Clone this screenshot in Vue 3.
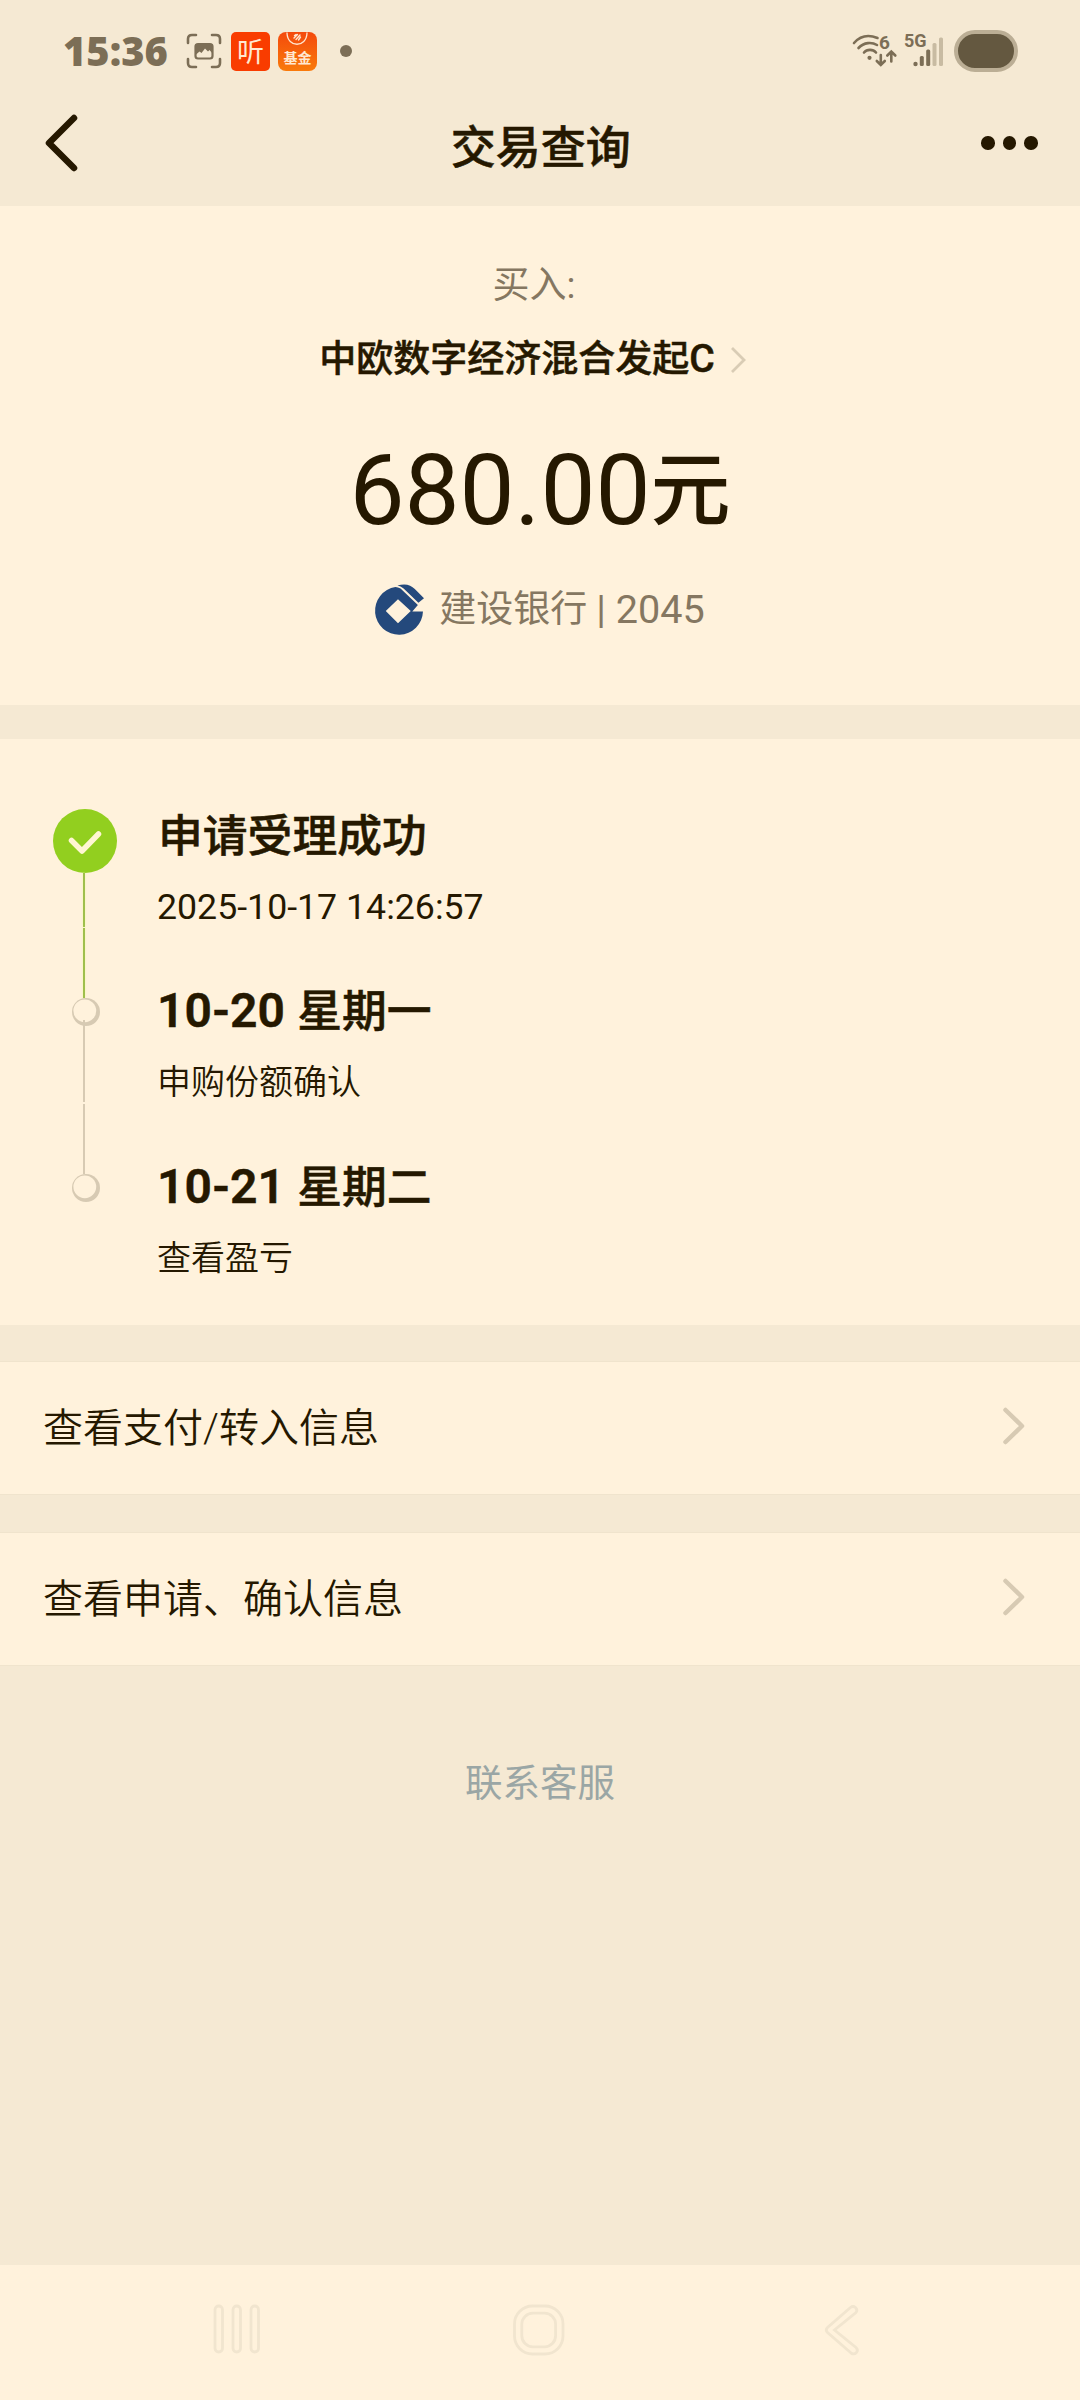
<template>
  <div class="page">
    <header class="status-bar">
      <span class="clock">15:36</span>
      <svg class="scan-icon" viewBox="0 0 36 36" fill="none">
        <path
          d="M2 10V6Q2 2 6 2H10M26 2H30Q34 2 34 6V10M34 26V30Q34 34 30 34H26M10 34H6Q2 34 2 30V26"
          stroke="#7c6e56"
          stroke-width="2.6"
          stroke-linecap="round"
        />
        <rect x="9.500" y="11" width="17" height="14.5" rx="2.5" stroke="#7c6e56" stroke-width="2.200" />
        <path
          d="M9.500 11H26.500V20.500L23.500 17L22 18.500L19 15.500L15.500 20L13.500 18.500L9.500 22Z"
          fill="#7c6e56"
        />
      </svg>
      <span class="app-icon app-icon--listen"><span>听</span></span>
      <span class="app-icon app-icon--fund">
        <svg viewBox="0 0 39 39" fill="none" stroke="#ffe6cf" stroke-linecap="round">
          <path d="M9 1C9.500 16 28.500 16 29 1" stroke-width="1.3" />
          <path d="M16 6L19.500 2.500M18 7.500L22 3M20.500 8L22.500 5M16.500 3.500L18 2.500" stroke-width="1.4" />
        </svg>
        <span>基金</span>
      </span>
      <i class="more-dot"></i>

      <svg class="wifi-icon" viewBox="0 0 46 36" fill="none" stroke="#7c6e56" stroke-linecap="round" stroke-width="2.6">
        <path d="M2 10C9 2 18 2 25.500 5M6.500 15C12 9 20 9 25 12M12 19.500C15 16 21 16 24 19.500" />
        <circle cx="17.500" cy="24.800" r="2.100" fill="#7c6e56" stroke="none" />
        <path d="M28.800 22V31M24.800 28L28.800 32L32.800 28M39.300 28.500V20M35.300 22.500L39.300 18.500L43.300 22.500" />
        <text x="27" y="15.500" class="wifi-text">6</text>
      </svg>
      <svg class="signal-icon" viewBox="0 0 40 36">
        <text x="-1" y="13.800" class="net-text">5G</text>
        <circle cx="10.500" cy="31" r="2.200" fill="#7c6e56" />
        <rect x="14.800" y="23" width="4" height="10" rx="1.500" fill="#7c6e56" />
        <rect x="21.200" y="16.500" width="4" height="16.500" rx="1.500" fill="#7c6e56" />
        <rect x="27.500" y="10" width="4" height="23" rx="1.500" fill="#c8bba2" />
        <rect x="34" y="4.500" width="4" height="28.500" rx="1.500" fill="#c8bba2" />
      </svg>
      <span class="battery"></span>
    </header>

    <nav class="title-bar">
      <svg class="back-icon" viewBox="0 0 34 58" fill="none">
        <path d="M30 4L5 29L30 54" stroke="#251800" stroke-width="6.500" stroke-linecap="round" stroke-linejoin="round" />
      </svg>
      <h1>交易查询</h1>
      <div class="menu"><i></i><i></i><i></i></div>
    </nav>

    <section class="summary">
      <p class="kind">买入:</p>
      <p class="fund">
        <span>中欧数字经济混合发起<b>C</b></span>
        <svg viewBox="0 0 16 28" fill="none">
          <path d="M2 2L14 14L2 26" stroke="#d9ccb5" stroke-width="2.800" />
        </svg>
      </p>
      <p class="amount">680.00<span>元</span></p>
      <p class="bank">
        <svg viewBox="0 0 50 50">
          <path
            d="M22 3A23.500 23.500 0 1 0 49 27H38.500L44 20.500L27 4.500Q24.500 3 22 3ZM24.500 15L37 26.500L24.500 38.500L12.500 26.500Z"
            fill="#24497c"
            fill-rule="evenodd"
          />
          <path d="M24 1.500C32-1 37 1 41 5L50 14L44.500 18.500L30 4.500Q27 2 24 1.500Z" fill="#24497c" />
        </svg>
        <span class="bank-name">建设银行</span>
        <span class="bank-tail">| 2045</span>
      </p>
    </section>

    <section class="progress">
      <div v-for="step in steps" :key="step.note" class="step" :class="{ 'step--done': step.done }">
        <div class="rail">
          <svg v-if="step.done" class="check" viewBox="0 0 64 64" fill="none">
            <circle cx="32" cy="32" r="32" fill="#92cf1f" />
            <path d="M18.500 31.500L29 42L45.500 25" stroke="#fff6d2" stroke-width="5.500" stroke-linecap="round" stroke-linejoin="round" />
          </svg>
          <svg v-else class="node" viewBox="0 0 28 28">
            <circle cx="14" cy="14" r="14" fill="#d7cab3" />
            <circle cx="12.800" cy="12.800" r="11.400" fill="#fff2dc" />
          </svg>
          <template v-if="!step.last">
            <i class="line line--upper"></i>
            <i class="line line--lower"></i>
          </template>
        </div>
        <div class="step-body">
          <h2><span v-if="step.date" class="num">{{ step.date }}</span>{{ step.title }}</h2>
          <p :class="{ time: step.done }">{{ step.note }}</p>
        </div>
      </div>
    </section>

    <a v-for="row in rows" :key="row" class="link-row">
      <span>{{ row }}</span>
      <svg viewBox="0 0 22 36" fill="none">
        <path d="M2.500 2L19 18L2.500 34" stroke="#d7cab3" stroke-width="4.500" stroke-linecap="round" stroke-linejoin="round" />
      </svg>
    </a>

    <a class="service">联系客服</a>

    <footer class="nav-bar">
      <svg class="nav-recent" viewBox="0 0 48 50">
        <rect x="2" y="2" width="7.500" height="46" rx="3.700" />
        <rect x="20" y="2" width="7.500" height="46" rx="3.700" />
        <rect x="38" y="2" width="7.500" height="46" rx="3.700" />
      </svg>
      <svg class="nav-home" viewBox="0 0 52 52">
        <rect x="1.500" y="2" width="48.500" height="48" rx="18" />
        <rect x="8.800" y="9.200" width="33.800" height="33.600" rx="11" />
      </svg>
      <svg class="nav-back" viewBox="0 0 36 52">
        <path d="M26.500 3.500L3.500 23.500Q1 26 3.500 28.500L27 49Q30 51 32.500 48.500Q34.500 46 32 43.500L10.500 26L32 8.500Q34 6 31.500 3.500Q29 1.500 26.500 3.500Z" />
      </svg>
    </footer>
  </div>
</template>

<script setup>
const steps = [
  { title: '申请受理成功', note: '2025-10-17 14:26:57', done: true },
  { date: '10-20 ', title: '星期一', note: '申购份额确认' },
  { date: '10-21 ', title: '星期二', note: '查看盈亏', last: true }
]

const rows = ['查看支付/转入信息', '查看申请、确认信息']
</script>

<style>
body {
  background: #f5e9d3;
}
</style>

<style scoped>
.page {
  display: flex;
  flex-direction: column;
  box-sizing: border-box;
  width: 1080px;
  height: 2400px;
  background: #f5e9d3;
  color: #251800;
  font-family: Roboto, 'Noto Sans CJK SC', sans-serif;
}

h1,
h2,
p {
  margin: 0;
}

svg {
  display: block;
  flex: none;
  overflow: visible;
}

.status-bar {
  display: flex;
  align-items: center;
  height: 102px;
  padding: 0 62px 0 63px;
}

.clock {
  width: 123px;
  margin-top: -1px;
  color: #7c6e56;
  font: 800 39.8px/50px 'Open Sans', sans-serif;
}

.scan-icon {
  width: 36px;
  height: 36px;
}

.app-icon {
  display: flex;
  justify-content: center;
  position: relative;
  width: 39px;
  height: 39px;
  margin-left: 9px;
  color: #ffe9d2;
  font-family: 'Noto Sans CJK SC', sans-serif;
}

.app-icon--listen {
  border-radius: 5px;
  background: #f93c00;
  font-size: 27px;
  font-weight: 400;
  line-height: 38px;
}

.app-icon--fund {
  align-items: flex-end;
  margin-left: 8px;
  border-radius: 8px;
  background: linear-gradient(#f44a0c, #f97a0b);
  font-size: 14px;
  font-weight: 700;
  line-height: 27px;
}

.app-icon--fund svg {
  position: absolute;
  inset: 0;
}

.more-dot {
  width: 12px;
  height: 12px;
  margin: 0 auto 0 23px;
  border-radius: 50%;
  background: #7c6e56;
}

.wifi-icon {
  width: 46px;
  height: 36px;
  margin: -1px 7px 0 0;
}

.wifi-text,
.net-text {
  fill: #7c6e56;
  stroke: none;
  font: 700 19px Roboto, sans-serif;
}

.net-text {
  font-size: 18px;
}

.signal-icon {
  width: 40px;
  height: 36px;
  margin-top: -1px;
}

.battery {
  box-sizing: border-box;
  width: 64px;
  height: 42px;
  margin-left: 9px;
  border: 4px solid #bbae95;
  border-radius: 21px;
  background: #645840;
}

.title-bar {
  display: flex;
  align-items: flex-start;
  justify-content: space-between;
  height: 104px;
  padding: 0 42px 0 44px;
}

.back-icon {
  width: 34px;
  height: 58px;
  margin-top: 12px;
}

.title-bar h1 {
  margin: 3px 0 0 22px;
  font-size: 45px;
  font-weight: 500;
  line-height: 88px;
}

/* slightly heavier than the medium cut */
.title-bar h1,
.fund,
.step-body h2 {
  -webkit-text-stroke: 0.5px currentColor;
}

.menu {
  display: flex;
  gap: 8px;
  margin-top: 34px;
}

.menu i {
  width: 13.5px;
  height: 13.5px;
  border-radius: 50%;
  background: #251800;
}

.summary {
  display: flex;
  flex-direction: column;
  align-items: center;
  height: 499px;
  background: #fff2dc;
}

.kind {
  margin: 52px 12px 0 0;
  color: #857761;
  font-size: 37px;
  line-height: 56px;
}

.fund {
  display: flex;
  align-items: center;
  gap: 15px;
  margin: 17px 15px 0 0;
  font-size: 37px;
  font-weight: 500;
  line-height: 56px;
}

.fund b {
  font-size: 39px;
  font-weight: 500;
}

.fund svg {
  width: 16px;
  height: 28px;
}

.amount {
  height: 120px;
  margin-top: 43px;
  font-size: 98px;
  line-height: 120px;
}

.amount span {
  position: relative;
  top: -6px;
  font-size: 80px;
  font-weight: 500;
  line-height: 1;
}

.bank {
  display: flex;
  align-items: center;
  margin: 31px 2px 0 0;
  color: #857761;
  line-height: 56px;
}

.bank svg {
  width: 51px;
  height: 51px;
  margin-top: -2px;
  margin-right: 15px;
}

.bank-name {
  font-size: 37px;
}

.bank-tail {
  margin-left: 9px;
  font-size: 39.6px;
}

.progress {
  box-sizing: border-box;
  height: 586px;
  margin-top: 34px;
  padding: 70px 53px 0;
  background: #fff2dc;
}

.step {
  display: flex;
  height: 176px;
}

.step--done {
  height: 189px;
}

.rail {
  display: flex;
  flex-direction: column;
  width: 104px;
}

.check {
  width: 64px;
  height: 64px;
}

.node {
  width: 28px;
  height: 28px;
  margin-left: 19px;
}

.line {
  width: 2px;
  margin-left: 30px;
  background: #d7cab3;
}

.line--upper {
  height: 82px;
  margin-top: -6px;
}

.line--lower {
  flex: 1;
  margin-top: 2px;
}

.step--done .line {
  background: #9fbf4c;
  box-shadow: 0 0 2px #eaff9c;
}

.step--done .line--upper {
  height: 54px;
  margin-top: 0;
}

.step--done .line--lower {
  margin-top: 1px;
}

.step-body h2 {
  margin-top: -13px;
  font-size: 44.8px;
  font-weight: 500;
  line-height: 52px;
  white-space: pre;
}

.step--done h2 {
  margin: 2px 0 0 1px;
}

.num {
  font-size: 48px;
  font-weight: 600;
  letter-spacing: 0.15px;
}

.step-body p {
  margin-top: 22px;
  font-size: 34px;
  font-weight: 350;
  line-height: 44px;
}

.step-body .time {
  margin-top: 22px;
  font-size: 35.7px;
  font-weight: 400;
}

.link-row {
  display: flex;
  align-items: center;
  justify-content: space-between;
  box-sizing: border-box;
  height: 134px;
  margin-top: 36px;
  padding: 0 55px 0 43px;
  border: solid #f0e4cd;
  border-width: 1px 0;
  background: #fff2dc;
  font-size: 40px;
  font-weight: 350;
}

.link-row span {
  margin-top: -6px;
}

.link-row + .link-row {
  margin-top: 37px;
}

.link-row svg {
  width: 22px;
  height: 36px;
  margin-top: -4px;
}

.service {
  align-self: center;
  margin-top: 89px;
  color: #9aa6a5;
  font-size: 37.5px;
  line-height: 56px;
}

.nav-bar {
  display: flex;
  box-sizing: border-box;
  height: 135px;
  margin-top: auto;
  padding: 39px 0 0 213px;
  background: #fff2dc;
}

.nav-bar svg {
  fill: none;
  stroke: #f1e5cf;
  stroke-width: 2.8;
}

.nav-recent {
  width: 48px;
  height: 50px;
}

.nav-home {
  width: 52px;
  height: 52px;
  margin-left: 252px;
}

.nav-back {
  width: 36px;
  height: 52px;
  margin-left: 259px;
}
</style>
